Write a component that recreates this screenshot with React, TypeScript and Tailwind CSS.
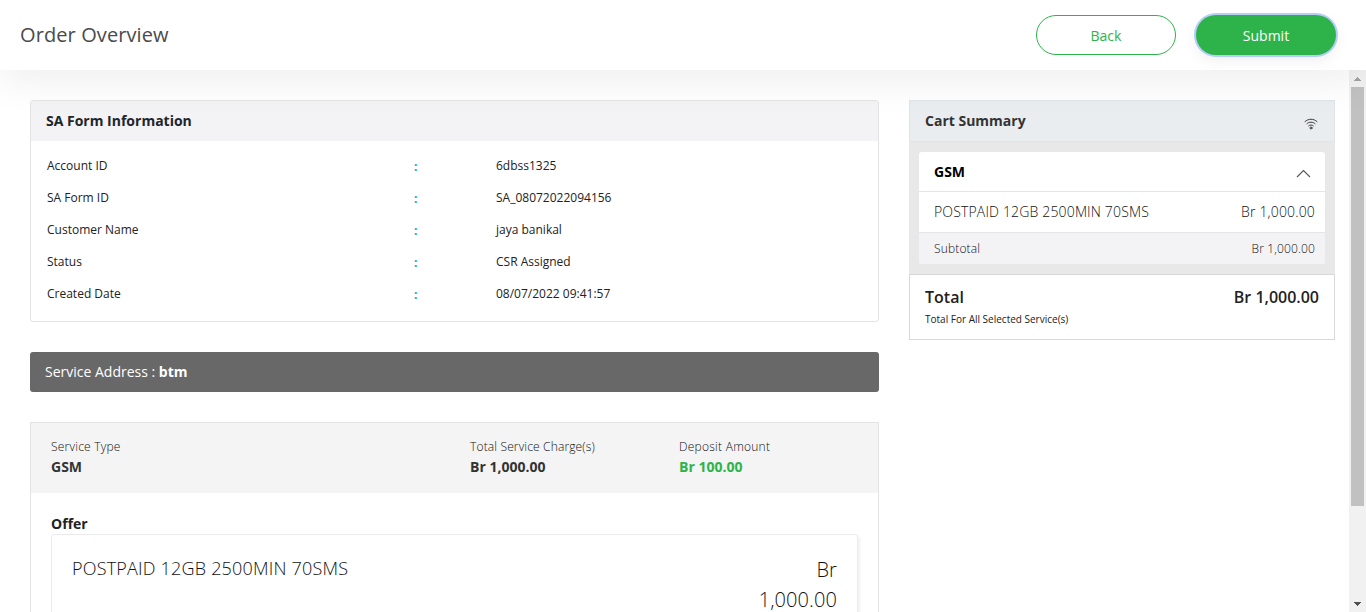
const formRows = [
  { label: 'Account ID', value: '6dbss1325' },
  { label: 'SA Form ID', value: 'SA_08072022094156' },
  { label: 'Customer Name', value: 'jaya banikal' },
  { label: 'Status', value: 'CSR Assigned' },
  { label: 'Created Date', value: '08/07/2022 09:41:57' },
];

function Header() {
  return (
    <header className="relative z-10 flex h-[70px] shrink-0 items-center justify-between bg-white pr-[30px] pl-5 shadow-[0_10px_40px_rgba(0,0,0,0.07)]">
      <h1 className="text-[20px] leading-[30px] font-normal tracking-[0.1px] text-[#4a4a4a]">Order Overview</h1>
      <div className="flex gap-5">
        <button className="h-10 w-[140px] rounded-full border border-[#2db34a] bg-white text-[14px] text-[#2db34a]">
          Back
        </button>
        <button className="h-10 w-[140px] rounded-full bg-[#2db34a] text-[14px] font-medium text-white shadow-[0_0_0_2px_#b5cdf8,0_5px_15px_rgba(0,0,0,0.07)]">
          Submit
        </button>
      </div>
    </header>
  );
}

function FormInfo() {
  return (
    <section className="h-[222px] rounded-[3px] border border-[#e3e3e3]">
      <h2 className="flex h-10 items-center bg-[#f3f3f6] px-[15px] pb-[2px] text-[14px] font-bold text-[#212529]">
        SA Form Information
      </h2>
      <dl className="pt-[9px] pl-4 text-[12px] text-[#222]">
        {formRows.map((row) => (
          <div key={row.label} className="flex h-8 items-center">
            <dt className="w-[367px]">{row.label}</dt>
            <span className="w-[82px] pt-px font-bold text-[#17a2b8]">:</span>
            <dd>{row.value}</dd>
          </div>
        ))}
      </dl>
    </section>
  );
}

function ServiceCard() {
  return (
    <section className="mt-[30px] h-[400px] border border-[#e3e3e3]">
      <div className="flex h-[70px] bg-[#f4f4f4] pt-[14px] pl-5 text-[#111]">
        <div className="w-[419px]">
          <p className="h-5 text-[12px] leading-5 font-light tracking-[0.22px]">Service Type</p>
          <p className="h-5 text-[14px] leading-5 font-bold text-[#333]">GSM</p>
        </div>
        <div className="w-[209px]">
          <p className="h-5 text-[12px] leading-5 font-light tracking-[0.15px]">Total Service Charge(s)</p>
          <p className="h-5 text-[14px] leading-5 font-bold text-[#333]">Br 1,000.00</p>
        </div>
        <div>
          <p className="h-5 text-[12px] leading-5 font-light tracking-[0.25px]">Deposit Amount</p>
          <p className="h-5 text-[14px] leading-5 font-bold text-[#2db34a]">Br 100.00</p>
        </div>
      </div>
      <div className="px-5 pt-[21px]">
        <h3 className="h-5 text-[14px] leading-5 font-bold text-[#222]">Offer</h3>
        <div className="flex h-[200px] justify-between rounded-[3px] border border-[#ebebeb] px-5 pt-[18px] font-light text-[#111] shadow-[2px_2px_3px_rgba(0,0,0,0.06)]">
          <p className="text-[18px] leading-[30px] tracking-[0.2px]">POSTPAID 12GB 2500MIN 70SMS</p>
          <p className="w-20 pt-[2px] text-right text-[20px] leading-[30px] tracking-[0.1px]">Br 1,000.00</p>
        </div>
      </div>
    </section>
  );
}

function WifiIcon() {
  return (
    <svg width="14" height="12" viewBox="0 0 14 12" fill="none" stroke="#3c3c3c" strokeWidth="1" strokeLinecap="round">
      <path d="M1 3.6C4.4 .4 9.6 .4 13 3.6M2.9 5.7c2.3-2.1 5.9-2.1 8.2 0M4.7 7.8c1.3-1.1 3.3-1.1 4.6 0" />
      <circle cx="7" cy="10" r="1" />
    </svg>
  );
}

function CartSummary() {
  return (
    <aside className="w-[426px]">
      <div className="flex h-[42px] items-center justify-between border border-[#e0e4e7] bg-[#e9edf0] pr-4 pl-[15px]">
        <h2 className="pb-[2px] text-[14px] font-bold text-[#333]">Cart Summary</h2>
        <div className="pt-[6px]"><WifiIcon /></div>
      </div>
      <div className="h-[132px] bg-[#e8e8e8] p-[10px]">
        <div className="overflow-hidden rounded-[3px] bg-white">
          <div className="flex h-[39px] items-center justify-between pr-[14px] pl-[15px]">
            <h3 className="text-[14px] font-bold text-black">GSM</h3>
            <svg className="mt-[3px]" width="15" height="9" viewBox="0 0 15 9" fill="none" stroke="#555" strokeWidth="1.1">
              <path d="M1 8l6.5-6.5L14 8" />
            </svg>
          </div>
          <div className="flex h-[42px] items-center justify-between border-y border-[#e5e5e5] pr-[10px] pb-[2px] pl-[15px] text-[14px] font-light tracking-[0.16px] text-[#111]">
            <span>POSTPAID 12GB 2500MIN 70SMS</span>
            <span>Br 1,000.00</span>
          </div>
          <div className="flex h-[31px] items-center justify-between bg-[#f3f3f6] pr-[10px] pl-[15px] text-[12px] font-light tracking-[0.15px] text-[#111]">
            <span>Subtotal</span>
            <span>Br 1,000.00</span>
          </div>
        </div>
      </div>
      <div className="h-[66px] border border-[#d8d8d8] px-[15px] pt-[10px] text-[#222]">
        <div className="flex h-6 justify-between text-[16px] leading-6 font-semibold">
          <span>Total</span>
          <span>Br 1,000.00</span>
        </div>
        <p className="mt-[3px] text-[10px] leading-[15px]">Total For All Selected Service(s)</p>
      </div>
    </aside>
  );
}

function Scrollbar() {
  return (
    <div className="flex w-[17px] shrink-0 flex-col items-center bg-[#f1f1f1]">
      <div className="flex h-[17px] items-center pt-px">
        <svg width="7" height="4" viewBox="0 0 7 4" fill="#a3a3a3" shapeRendering="crispEdges">
          <path d="M3 0h1v1h1v1h1v1h1v1H0V3h1V2h1V1h1z" />
        </svg>
      </div>
      <div className="h-[419px] w-[13px] bg-[#c1c1c1]" />
      <div className="mt-auto flex h-[17px] items-center">
        <svg width="7" height="4" viewBox="0 0 7 4" fill="#505050" shapeRendering="crispEdges">
          <path d="M0 0h7v1H6v1H5v1H4v1H3V3H2V2H1V1H0z" />
        </svg>
      </div>
    </div>
  );
}

export default function App() {
  return (
    <div className="flex h-[612px] w-[1366px] flex-col overflow-hidden bg-white font-['Open_Sans',sans-serif]">
      <Header />
      <div className="flex min-h-0 flex-1">
        <main className="flex flex-1 items-start gap-[30px] overflow-hidden pt-[30px] pl-[30px]">
          <div className="w-[849px]">
            <FormInfo />
            <div className="mt-[30px] flex h-10 items-center rounded-[3px] bg-[#686868] px-[15px] pb-[2px] text-[14px] text-white">
              <span>Service Address : <b>btm</b></span>
            </div>
            <ServiceCard />
          </div>
          <CartSummary />
        </main>
        <Scrollbar />
      </div>
    </div>
  );
}
